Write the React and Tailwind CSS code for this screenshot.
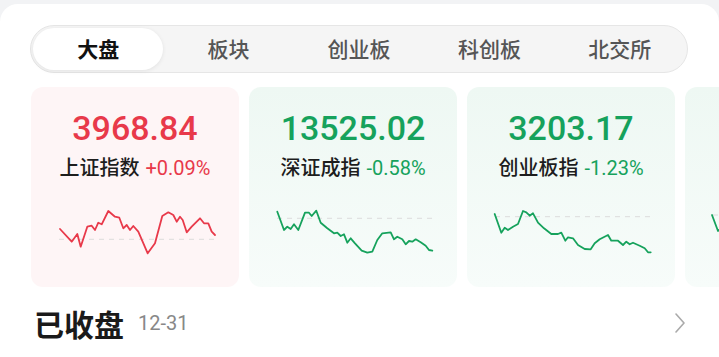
const TABS = ["大盘", "板块", "创业板", "科创板", "北交所"];

const CARDS = [
  {
    value: "3968.84",
    name: "上证指数",
    change: "+0.09%",
    up: true,
    base: 34.3,
    points:
      "29,24 40.7,36.7 46.3,29 49.7,41.7 56.3,21.7 60.7,20.7 64,25 67.3,17.7 70.7,19.3 77.3,6 84,11.7 88.3,12.7 92.3,23.3 95.7,20 99,25 102.3,21 107.3,26.7 116.7,48.3 124,38.3 131.3,11 137.3,7.3 142.3,10 145.7,16.7 149,11.7 151.7,15 155.7,27.3 160.7,21.7 169,13.3 173,18.3 177.3,18.3 180.7,26.7 184,30",
  },
  {
    value: "13525.02",
    name: "深证成指",
    change: "-0.58%",
    up: false,
    base: 13.3,
    points:
      "28.3,6.7 35,25 38.3,21.7 41.7,24 45,19.3 49.3,25 56,7.7 60,7.7 62.7,11 67.3,5.7 71.7,17.7 78.3,23.3 85,28.3 88.3,27.7 91.7,31 95,29.3 98.3,37.7 101.7,33.3 106,38.3 112.7,45.7 118.3,47.7 123.3,46.7 128.3,35 133.3,28.3 141.7,27.3 145,34.3 148.3,31.7 153.3,34.3 156.7,39.3 160,36 163.3,36.7 166.7,34.3 171.7,37.3 176.7,40.7 180,45 183.3,45.7",
  },
  {
    value: "3203.17",
    name: "创业板指",
    change: "-1.23%",
    up: false,
    base: 11.7,
    points:
      "27.7,9 34.3,27.7 37.7,22.7 41,25 46,21.7 51,19 56,6 59.3,7.3 62.7,10.7 66,8.3 71,17.7 77,23.3 84.3,29 91,29 94.3,27.7 98.3,35.7 101,32.3 106,33.3 111,40 117.7,44 123.7,44.3 127.7,38.3 132.7,34.3 141,30 144.3,35.7 151,35.7 156,40 159.3,36.7 162.7,39.3 166,37.7 172.7,40.7 177.7,43.3 181,47.3 183.7,47.3",
  },
  {
    // only the left edge of this card is on screen
    value: "",
    name: "",
    change: "",
    up: false,
    base: 10,
    points:
      "27,10 33,26 38,22 44,24 52,12 58,8 66,14 78,24 92,30 104,34 118,42 130,36 146,34 160,40 184,46",
  },
];

function Spark({ points, base, up }) {
  const color = up ? "#e8394a" : "#16a25c";
  return (
    <svg width="208" height="56" viewBox="0 0 208 56" className="block">
      <line x1="28" y1={base} x2="184" y2={base} stroke="#dcdcdc" strokeWidth="1" strokeDasharray="5 5" />
      <polyline points={points} fill="none" stroke={color} strokeWidth="1.8" strokeLinejoin="round" strokeLinecap="round" />
    </svg>
  );
}

export default function App() {
  return (
    <div className="w-[719px] h-[357px] overflow-hidden bg-[#f2f3f5] pt-[4px] font-['Noto_Sans_CJK_SC',sans-serif]">
      <div className="h-full bg-white rounded-t-[18px] pt-[21px]">
        <div className="mx-[30px] w-[658px] h-[48px] rounded-full border border-[#e6e6e6] bg-[#f5f5f5] p-[2px] flex">
          {TABS.map((t, i) => (
            <div
              key={t}
              className={
                i === 0
                  ? "w-[131px] h-full rounded-full bg-white shadow-[0_1px_4px_rgba(0,0,0,0.08)] flex items-center justify-center text-[21px] font-bold text-[#111]"
                  : "w-[131px] h-full flex items-center justify-center text-[21px] font-medium text-[#555]"
              }
            >
              {t}
            </div>
          ))}
        </div>

        <div className="mt-[14px] pl-[31px] flex gap-[10px] overflow-hidden">
          {CARDS.map((c, i) => (
            <div
              key={i}
              className={
                c.up
                  ? "shrink-0 w-[208px] h-[200px] rounded-[12px] bg-[#fef5f6] pt-[21px]"
                  : "shrink-0 w-[208px] h-[200px] rounded-[12px] bg-gradient-to-b from-[#eef8f3] to-[#f7fcfa] pt-[21px]"
              }
            >
              <div
                className={
                  c.up
                    ? "h-[40px] text-center text-[34px] leading-[40px] font-medium text-[#e8394a] font-['Roboto',sans-serif]"
                    : "h-[40px] text-center text-[34px] leading-[40px] font-medium text-[#16a25c] font-['Roboto',sans-serif]"
                }
              >
                {c.value}
              </div>
              <div className="mt-[6px] h-[26px] flex justify-center items-baseline gap-[6px] leading-[26px]">
                <span className="text-[20px] font-medium text-[#1d1d1d]">{c.name}</span>
                <span
                  className={
                    c.up
                      ? "text-[20px] text-[#e8394a] font-['Roboto',sans-serif]"
                      : "text-[20px] text-[#16a25c] font-['Roboto',sans-serif]"
                  }
                >
                  {c.change}
                </span>
              </div>
              <div className="mt-[25px]">
                <Spark points={c.points} base={c.base} up={c.up} />
              </div>
            </div>
          ))}
        </div>

        <div className="mt-[18px] pl-[34px] pr-[34px] flex items-center">
          <span className="text-[30px] leading-[36px] font-bold text-[#1a1a1a]">已收盘</span>
          <span className="ml-[14px] text-[20px] text-[#888] font-['Roboto',sans-serif]">12-31</span>
          <svg className="ml-auto" width="10" height="20" viewBox="0 0 10 20">
            <polyline points="1,1 9,10 1,19" fill="none" stroke="#aaa" strokeWidth="1.6" strokeLinejoin="round" strokeLinecap="round" />
          </svg>
        </div>
      </div>
    </div>
  );
}
